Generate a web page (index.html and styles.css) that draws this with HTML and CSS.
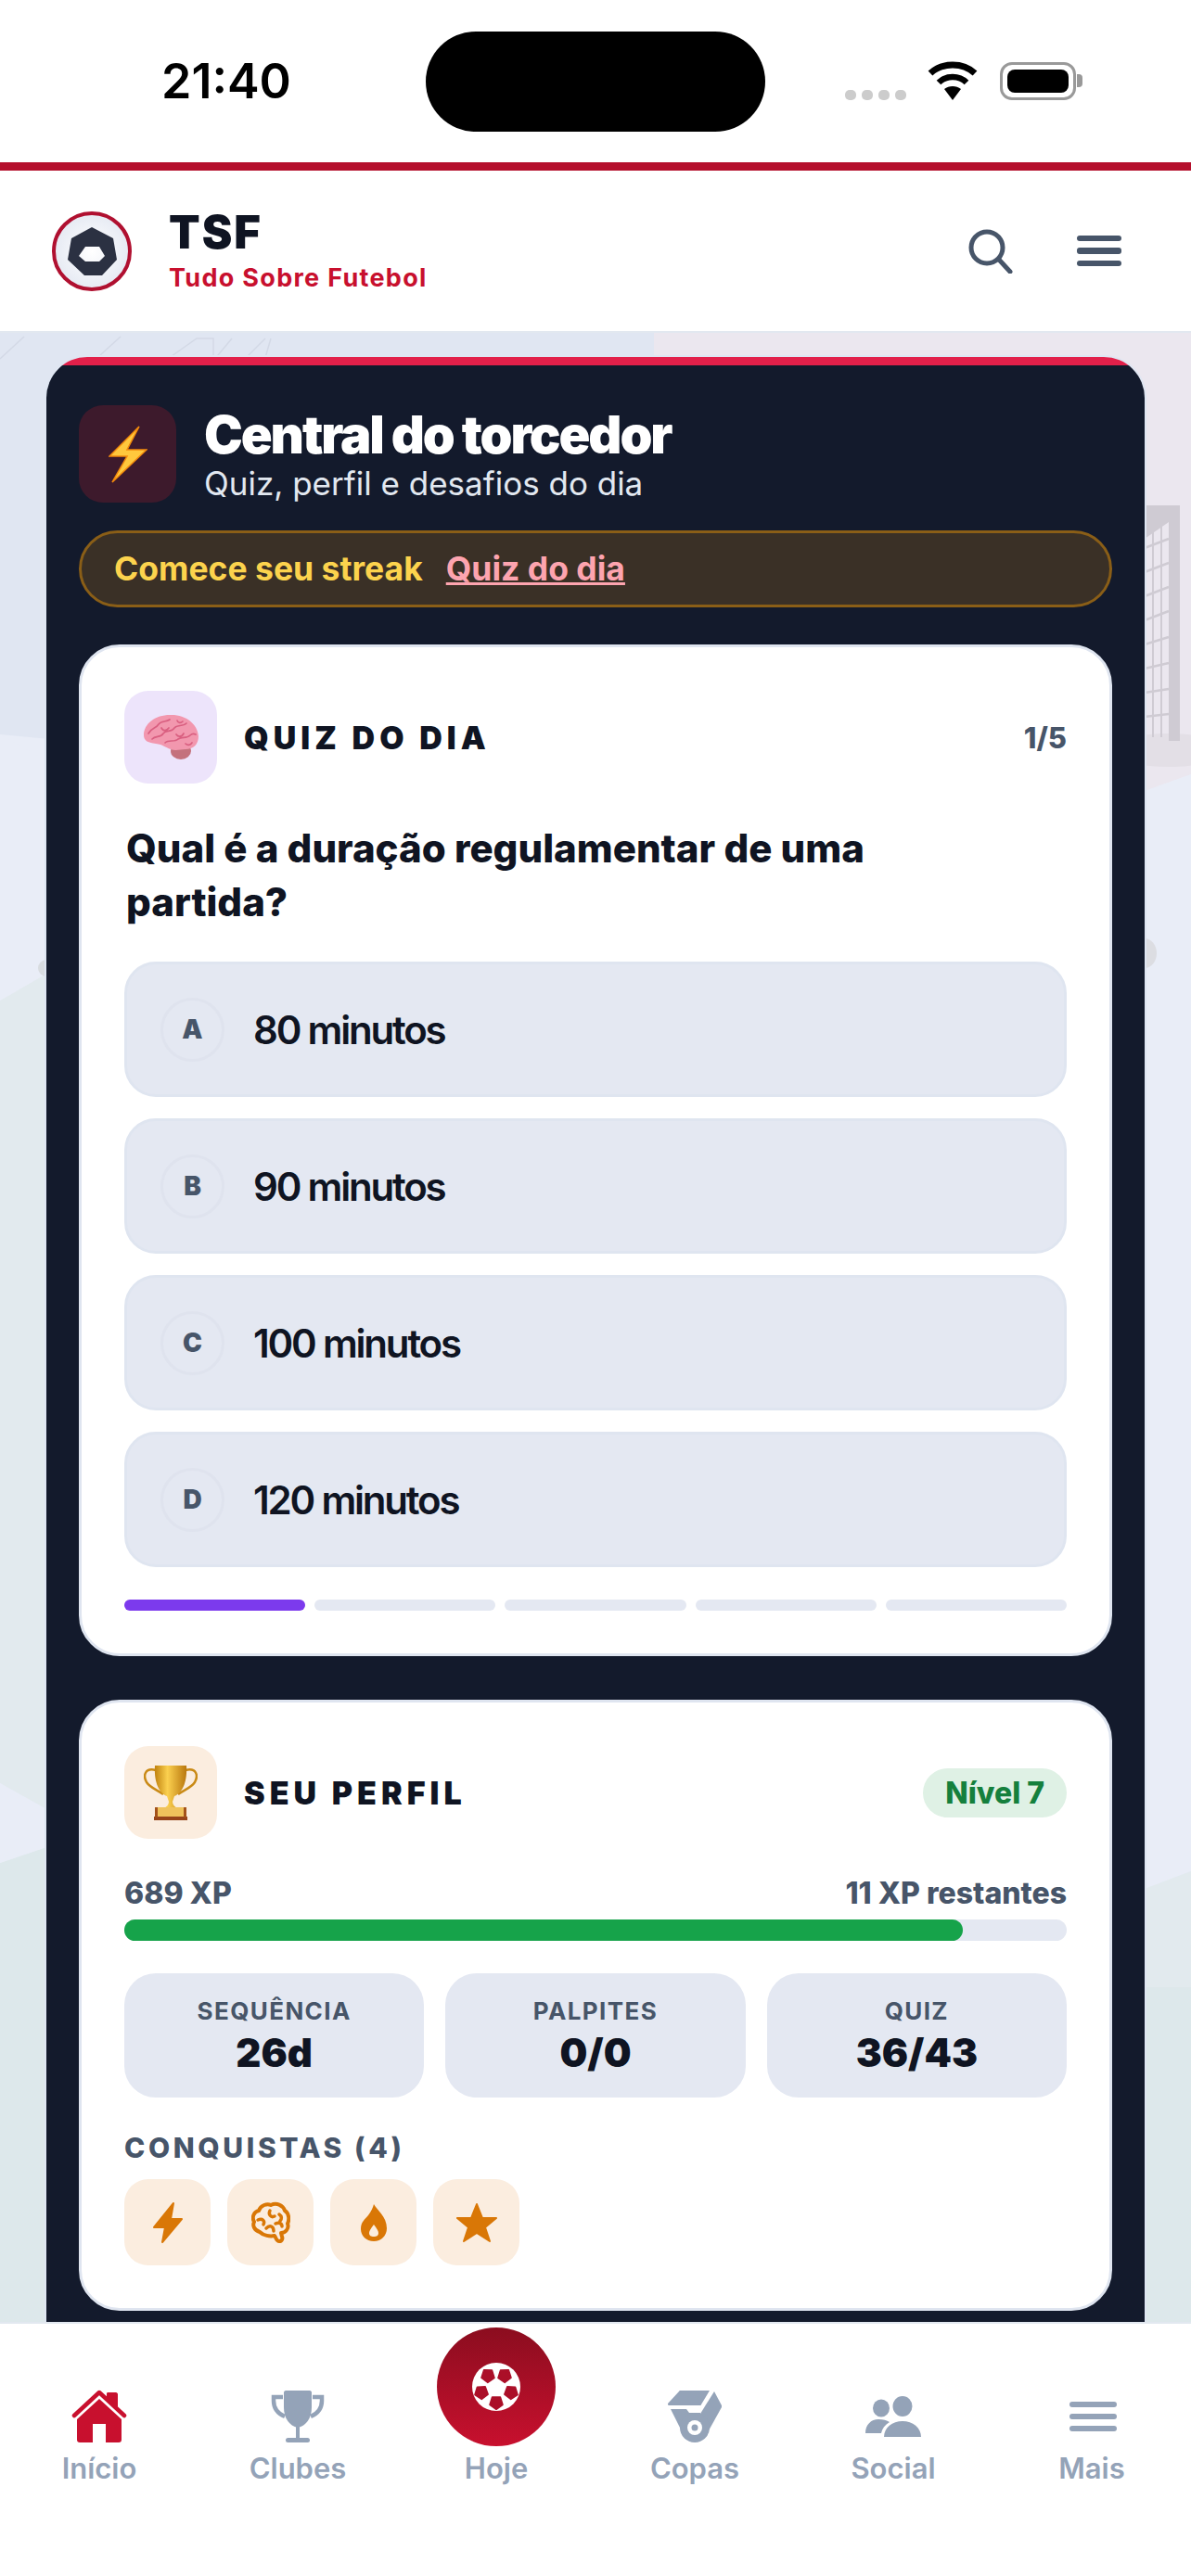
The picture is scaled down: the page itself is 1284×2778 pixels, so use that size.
FILE: index.html
```html
<!DOCTYPE html>
<html lang="pt-BR">
<head>
  <meta charset="UTF-8">
  <meta name="viewport" content="width=device-width, initial-scale=1.0">
  <title>TSF - Tudo Sobre Futebol</title>
  <link rel="stylesheet" href="styles.css">
</head>
<body>
  <div class="page">
    <!-- iOS status bar -->
    <div class="status-bar">
      <span class="status-time">21:40</span>
      <div class="island"></div>
      <div class="status-icons">
        <div class="signal"><i></i><i></i><i></i><i></i></div>
        <svg class="wifi" viewBox="0 0 56 42" width="56" height="42">
          <path d="M28 42 L19 30 C24 26 32 26 37 30 Z" fill="#000"/>
          <path d="M13 23 C21 15 35 15 43 23" fill="none" stroke="#000" stroke-width="6.5"/>
          <path d="M4 13 C17 1 39 1 52 13" fill="none" stroke="#000" stroke-width="7"/>
        </svg>
        <div class="battery"><div class="battery-level"></div></div>
        <div class="battery-tip"></div>
      </div>
    </div>
    <div class="red-line"></div>

    <header class="top-bar">
      <div class="brand">
        <svg class="logo" viewBox="0 0 86 86" width="86" height="86">
          <defs>
            <radialGradient id="logoBg" cx="50%" cy="50%" r="50%">
              <stop offset="0" stop-color="#ffffff"/>
              <stop offset="1" stop-color="#e6eaf3"/>
            </radialGradient>
          </defs>
          <circle cx="43" cy="43" r="41" fill="url(#logoBg)" stroke="#b01030" stroke-width="4"/>
          <path d="M43 17 L66 29 L70 52 L54 69 L35 69 L17 52 L21 29 Z M36 38 L29 48 L36 54 L51 54 L57 48 L51 38 Z" fill="#2b3142" fill-rule="evenodd"/>
        </svg>
        <div class="brand-text">
          <div class="brand-name">TSF</div>
          <div class="brand-tag">Tudo Sobre Futebol</div>
        </div>
      </div>
      <div class="top-actions">
        <svg viewBox="0 0 48 48" width="48" height="48">
          <circle cx="20" cy="20" r="17" fill="none" stroke="#475569" stroke-width="5"/>
          <path d="M33 33 L45 46" stroke="#475569" stroke-width="5" stroke-linecap="round"/>
        </svg>
        <div class="burger"><i></i><i></i><i></i></div>
      </div>
    </header>

    <main class="content">
      <!-- decorative stadium background -->
      <svg class="backdrop" viewBox="0 0 1284 2145" width="1284" height="2145">
        <rect width="1284" height="2145" fill="#e9edf7"/>
        <polygon points="0,0 705,0 705,500 0,433" fill="#e0e6f2"/>
        <polygon points="705,0 1284,0 1284,476 1234,494 705,500" fill="#ebe7ef"/>
        <polygon points="0,720 50,691 1284,691 1284,1659 1234,1678 50,1592 0,1564" fill="#e2eaee"/>
        <polygon points="0,1650 50,1633 1284,1633 1284,2145 0,2145" fill="#dde8eb"/>
        <polygon points="1234,1678 1284,1659 1284,1784 1234,1784" fill="#e2eaee"/>
        <polygon points="0,1564 50,1592 50,1633 0,1650" fill="#e9edf7"/>
        <polygon points="0,433 50,461 50,691 0,720" fill="#e9edf7"/>
        <polygon points="1234,100 1284,100 1284,476 1234,494" fill="#ebe7ef"/>
        <polygon points="1234,494 1284,476 1284,1659 1234,1678" fill="#e9edf7"/>
        <ellipse cx="1234" cy="669" rx="13" ry="16" fill="#dcdde2"/>
        <ellipse cx="50" cy="685" rx="9" ry="9" fill="#d8dce0"/>
        <ellipse cx="1260" cy="450" rx="60" ry="18" fill="#e3dfe6"/>
        <g class="goal">
          <path d="M1234 186 H1272 V440 H1260 V204 L1234 222 Z" fill="#cfcbd3"/>
          <path d="M1234 232 L1260 222 M1234 258 L1260 248 M1234 284 L1260 274 M1234 310 L1260 300 M1234 336 L1260 328 M1234 362 L1260 356 M1234 388 L1260 384 M1234 414 L1260 411" stroke="#cfcbd3" stroke-width="2.5"/>
          <path d="M1243 205 V436 M1252 200 V436" stroke="#cfcbd3" stroke-width="2"/>
        </g>
        <path d="M0 28 L26 4 M108 24 L130 4 M178 30 L212 6 H230 V30 M178 30 H230 L250 6 M262 30 L286 6 M285 30 L292 6" fill="none" stroke="#d3d9e6" stroke-width="1.5"/>
      </svg>

      <section class="panel">
        <div class="panel-head">
          <div class="panel-icon">
            <svg viewBox="0 0 42 62" width="42" height="62">
              <polygon points="33,1 1,33 20,33 4,61 41,26 20,26" fill="#ffc83d" stroke="#f28a0c" stroke-width="1.5"/>
            </svg>
          </div>
          <div>
            <h1 class="panel-title">Central do torcedor</h1>
            <p class="panel-sub">Quiz, perfil e desafios do dia</p>
          </div>
        </div>

        <div class="streak">
          <span class="streak-text">Comece seu streak</span>
          <a class="streak-link">Quiz do dia</a>
        </div>

        <!-- Quiz card -->
        <div class="card">
          <div class="card-head">
            <div class="card-icon card-icon-purple">
              <svg viewBox="0 0 60 50" width="60" height="50">
                <ellipse cx="41" cy="40" rx="11" ry="9" fill="#c4717c"/>
                <path d="M1 23 C1 10 14 1 29 1 C45 0 59 10 60 24 C60 33 54 38 46 38 C40 38 36 40 30 38 C24 36 22 33 14 32 C6 31 1 29 1 23 Z" fill="#f297ae"/>
                <path d="M6 21 C10 14 14 16 17 11 C20 7 25 9 29 6 M10 27 C14 23 19 26 22 21 C25 17 31 20 34 15 C37 11 43 14 47 10 M24 31 C28 27 34 31 38 27 C42 24 47 27 51 23 C53 21 55 21 57 22 M20 15 C22 19 26 18 28 15 M36 22 C38 25 42 25 44 21 M46 32 C48 34 51 34 53 31 M37 7 C38 10 41 10 43 8" fill="none" stroke="#d95f80" stroke-width="1.7" stroke-linecap="round"/>
              </svg>
            </div>
            <h2 class="card-title">QUIZ DO DIA</h2>
            <span class="quiz-count">1/5</span>
          </div>

          <p class="question">Qual é a duração regulamentar de uma partida?</p>

          <div class="options">
            <div class="option"><span class="option-letter">A</span><span>80 minutos</span></div>
            <div class="option"><span class="option-letter">B</span><span>90 minutos</span></div>
            <div class="option"><span class="option-letter">C</span><span>100 minutos</span></div>
            <div class="option"><span class="option-letter">D</span><span>120 minutos</span></div>
          </div>

          <div class="quiz-steps">
            <i class="step-on"></i><i></i><i></i><i></i><i></i>
          </div>
        </div>

        <!-- Profile card -->
        <div class="card">
          <div class="card-head">
            <div class="card-icon card-icon-orange">
              <svg viewBox="0 0 58 60" width="58" height="60">
                <defs>
                  <linearGradient id="gold" x1="0" y1="0" x2="1" y2="0">
                    <stop offset="0" stop-color="#c0820f"/>
                    <stop offset="0.4" stop-color="#fbd04f"/>
                    <stop offset="1" stop-color="#b9770e"/>
                  </linearGradient>
                </defs>
                <path d="M13 6 C1 3 -1 12 3 19 C7 25 14 27 21 32 M45 6 C57 3 59 12 55 19 C51 25 44 27 37 32" fill="none" stroke="#c98a16" stroke-width="2.5"/>
                <path d="M12 1 H46 C47 16 43 30 33 34 L31 40 C31 43 33 45 36 47 H22 C25 45 27 43 27 40 L25 34 C15 30 11 16 12 1 Z" fill="url(#gold)"/>
                <rect x="12" y="46" width="34" height="11" fill="#efc25c"/>
                <rect x="11" y="56" width="36" height="4" fill="#96441a"/>
                <rect x="12" y="46" width="3" height="11" fill="#a3521a"/>
                <rect x="43" y="46" width="3" height="11" fill="#a3521a"/>
              </svg>
            </div>
            <h2 class="card-title">SEU PERFIL</h2>
            <span class="level-badge">Nível 7</span>
          </div>

          <div class="xp-row"><span>689 XP</span><span>11 XP restantes</span></div>
          <div class="xp-bar"><div class="xp-fill" style="width: 89%"></div></div>

          <div class="stats">
            <div class="stat"><span class="stat-label">SEQUÊNCIA</span><span class="stat-value">26d</span></div>
            <div class="stat"><span class="stat-label">PALPITES</span><span class="stat-value">0/0</span></div>
            <div class="stat"><span class="stat-label">QUIZ</span><span class="stat-value">36/43</span></div>
          </div>

          <div class="badges-title">CONQUISTAS (4)</div>
          <div class="badges">
            <div class="badge">
              <svg viewBox="0 0 34 46" width="34" height="46">
                <polygon points="23,2 2,28 14,28 11,44 32,19 20,19" fill="#d97706" stroke="#d97706" stroke-width="2" stroke-linejoin="round"/>
              </svg>
            </div>
            <div class="badge">
              <svg viewBox="0 0 42 46" width="42" height="46">
                <path d="M9 33 C3 31 1 26 3 22 C0 17 3 11 8 10 C10 4 17 2 21 4 C27 1 34 4 36 10 C41 13 41 20 39 24 C41 29 37 34 32 34 L33 38 C34 40 33 43 30 43 C27 43 27 40 25 37 C20 38 13 37 9 33 Z" fill="none" stroke="#d97706" stroke-width="4" stroke-linejoin="round"/>
                <path d="M7 20 C12 18 15 21 13 25 M20 10 C18 14 21 18 25 16 M16 29 C20 25 24 27 24 32 M30 14 C33 16 33 19 31 21 M26 24 C30 22 33 24 33 27" fill="none" stroke="#d97706" stroke-width="3.5" stroke-linecap="round"/>
              </svg>
            </div>
            <div class="badge">
              <svg viewBox="0 0 30 42" width="30" height="42">
                <path d="M15 1 C18 7 29 14 29 27 C29 35 23 41 15 41 C7 41 1 35 1 28 C1 20 5 18 9 13 C12 9 14 5 15 1 Z M15 23 C12 27 10 30 10 32 C10 35 12 36 15 36 C18 36 20 35 20 32 C20 30 18 27 15 23 Z" fill="#d97706" fill-rule="evenodd"/>
              </svg>
            </div>
            <div class="badge">
              <svg viewBox="0 0 46 44" width="46" height="44">
                <polygon points="23,2 29,17 44,17 32,27 37,42 23,33 9,42 14,27 2,17 17,17" fill="#d97706" stroke="#d97706" stroke-width="2" stroke-linejoin="round"/>
              </svg>
            </div>
          </div>
        </div>
      </section>
    </main>

    <nav class="bottom-nav">
      <a class="nav-item">
        <svg viewBox="0 0 60 60" width="60" height="60">
          <path d="M38 12 V5 C38 4 39 4 40 4 H48 C49 4 50 5 50 6 V20 Z" fill="#c8102e"/>
          <path d="M3 29 L30 4 L57 29" fill="none" stroke="#c8102e" stroke-width="4.5" stroke-linecap="round" stroke-linejoin="round"/>
          <path d="M6 33 L30 11 L54 33 V55 C54 57 53 58 51 58 H37 V38 H23 V58 H9 C7 58 6 57 6 55 Z" fill="#c8102e"/>
        </svg>
        <span>Início</span>
      </a>
      <a class="nav-item">
        <svg viewBox="0 0 60 60" width="60" height="60">
          <path d="M14 9 H4 V13 C4 21 9 27 16 30 M46 9 H56 V13 C56 21 51 27 44 30" fill="none" stroke="#94a3b8" stroke-width="4.5"/>
          <path d="M15 4 C15 3 16 2 17 2 H43 C44 2 45 3 45 4 V20 C45 32 39 40 30 42 C21 40 15 32 15 20 Z" fill="#94a3b8"/>
          <rect x="28" y="40" width="4" height="15" fill="#94a3b8"/>
          <rect x="17" y="53" width="26" height="5" rx="2.5" fill="#94a3b8"/>
        </svg>
        <span>Clubes</span>
      </a>
      <a class="nav-item">
        <div class="nav-ball">
          <svg viewBox="-27 -27 54 54" width="54" height="54">
            <defs>
              <polygon id="patch" points="0,-7.5 7,-2.3 4.4,6 -4.4,6 -7,-2.3" fill="#ab0f28" stroke="#ab0f28" stroke-width="1.5" stroke-linejoin="round"/>
            </defs>
            <circle r="26" fill="#fff"/>
            <use href="#patch" transform="translate(-9 -12) rotate(-35)"/>
            <use href="#patch" transform="translate(9 -12) rotate(35)"/>
            <use href="#patch" transform="translate(-16 6) rotate(-110)"/>
            <use href="#patch" transform="translate(16 6) rotate(110)"/>
            <use href="#patch" transform="translate(0 17) rotate(180)"/>
          </svg>
        </div>
        <span>Hoje</span>
      </a>
      <a class="nav-item">
        <svg viewBox="0 0 60 60" width="60" height="60">
          <path d="M13 3 C13 2 14 2 15 2 H46 L37 17 C37 18 36 18 35 18 H2 C1 18 1 17 1 16 Z" fill="#94a3b8"/>
          <path d="M51 3 L59 18 V20 L44 47 H37 L36 27 Z" fill="#94a3b8"/>
          <path d="M4 22 H21 L24 26 H36 V46 H16 Z" fill="#94a3b8"/>
          <circle cx="30" cy="42" r="16" fill="#94a3b8"/>
          <circle cx="30" cy="42" r="8" fill="#fff"/>
          <circle cx="30" cy="42" r="3.5" fill="#94a3b8"/>
        </svg>
        <span>Copas</span>
      </a>
      <a class="nav-item">
        <svg viewBox="0 0 60 60" width="60" height="60">
          <ellipse cx="17" cy="21" rx="9" ry="9.5" fill="#94a3b8"/>
          <ellipse cx="40" cy="19" rx="10.5" ry="11" fill="#94a3b8"/>
          <path d="M0 48 C0 39 6 33 14 33 C19 33 23 34 26 36 C21 39 18 43 17 48 Z" fill="#94a3b8"/>
          <path d="M20 52 C20 42 29 35 40 35 C51 35 60 42 60 52 Z" fill="#94a3b8"/>
        </svg>
        <span>Social</span>
      </a>
      <a class="nav-item">
        <svg viewBox="0 0 60 60" width="60" height="60">
          <path d="M9 17 H54 M9 30 H54 M9 43 H54" stroke="#94a3b8" stroke-width="6" stroke-linecap="round"/>
        </svg>
        <span>Mais</span>
      </a>
    </nav>
  </div>
</body>
</html>
```

FILE: styles.css
```css
/* Global Styles */
* {
  box-sizing: border-box;
}

body {
  margin: 0;
  padding: 0;
  font-family: Inter, "Noto Sans", sans-serif;
  background-color: #ffffff;
  color: #0f1422;
}

h1, h2, p {
  margin: 0;
}

.page {
  width: 1284px;
  height: 2778px;
  display: flex;
  flex-direction: column;
  overflow: hidden;
}

/* Status bar */
.status-bar {
  height: 175px;
  display: flex;
  align-items: flex-start;
  padding-top: 34px;
}

.status-time {
  width: 459px;
  padding: 28px 0 0 174px;
  font-size: 52px;
  line-height: 52px;
  font-weight: 600;
  color: #000000;
}

.island {
  width: 366px;
  height: 108px;
  border-radius: 54px;
  background-color: #000000;
}

.status-icons {
  display: flex;
  align-items: flex-end;
  height: 74px;
  padding-left: 86px;
}

.signal {
  display: flex;
  gap: 6px;
  margin-right: 22px;
}

.signal i {
  width: 12px;
  height: 11px;
  border-radius: 5px;
  background-color: #cccccc;
}

.wifi {
  margin-right: 23px;
}

.battery {
  width: 82px;
  height: 41px;
  padding: 5px;
  border: 3px solid #999999;
  border-radius: 13px;
}

.battery-level {
  height: 100%;
  border-radius: 8px;
  background-color: #000000;
}

.battery-tip {
  width: 6px;
  height: 14px;
  margin: 0 0 14px 1px;
  border-radius: 0 4px 4px 0;
  background-color: #999999;
}

.red-line {
  height: 9px;
  background-color: #b50f2c;
}

/* Top bar */
.top-bar {
  height: 175px;
  flex-shrink: 0;
  display: flex;
  align-items: center;
  justify-content: space-between;
  padding: 0 75px 0 56px;
  border-bottom: 2px solid #e2e8f0;
}

.brand {
  display: flex;
  align-items: center;
  gap: 40px;
}

.brand-name {
  font-size: 49px;
  line-height: 50px;
  font-weight: 900;
  letter-spacing: 2px;
}

.brand-tag {
  margin-top: 8px;
  font-size: 27px;
  line-height: 32px;
  font-weight: 700;
  letter-spacing: 1.3px;
  color: #c8102e;
}

.top-actions {
  display: flex;
  align-items: center;
  gap: 69px;
}

.burger {
  display: flex;
  flex-direction: column;
  gap: 7px;
}

.burger i {
  display: block;
  width: 48px;
  height: 6.5px;
  border-radius: 3px;
  background-color: #475569;
}

/* Main content */
.content {
  position: relative;
  flex: 1;
  min-height: 0;
  overflow: hidden;
  padding: 26px 50px 0;
}

.backdrop {
  position: absolute;
  top: 0;
  left: 0;
}

.panel {
  position: relative;
  padding: 52px 35px 60px;
  border-radius: 44px 44px 0 0;
  background: linear-gradient(#e2204a 9px, #131a2c 9px);
  box-shadow: 0 0 0 2px #dfe6f2;
}

.panel-head {
  display: flex;
  align-items: center;
  gap: 30px;
}

.panel-icon {
  width: 105px;
  height: 105px;
  display: flex;
  align-items: center;
  justify-content: center;
  border-radius: 26px;
  background-color: #3d1a2c;
}

.panel-title {
  font-size: 56px;
  line-height: 60px;
  font-weight: 900;
  letter-spacing: -2.1px;
  color: #ffffff;
}

.panel-sub {
  margin-top: 2px;
  font-size: 35px;
  line-height: 40px;
  color: #e2e8f0;
}

.streak {
  height: 83px;
  margin-top: 30px;
  display: flex;
  align-items: center;
  gap: 25px;
  padding-left: 35px;
  border: 3px solid #8a5e17;
  border-radius: 42px;
  background-color: #3a3026;
  font-size: 35.5px;
  font-weight: 700;
}

.streak-text {
  color: #fcd34d;
}

.streak-link {
  color: #fda4af;
  text-decoration: underline;
}

/* Cards */
.card {
  margin-top: 40px;
  padding: 47px 46px 46px;
  border: 3px solid #dfe5f0;
  border-radius: 44px;
  background-color: #ffffff;
}

.card + .card {
  margin-top: 47px;
}

.card-head {
  display: flex;
  align-items: center;
  gap: 29px;
  height: 100px;
}

.card-icon {
  width: 100px;
  height: 100px;
  display: flex;
  align-items: center;
  justify-content: center;
  border-radius: 26px;
}

.card-icon-purple {
  background-color: #ede4fb;
}

.card-icon-orange {
  background-color: #fbeddf;
}

.card-title {
  flex: 1;
  font-size: 34px;
  font-weight: 900;
  letter-spacing: 5px;
}

.quiz-count {
  font-size: 31px;
  font-weight: 800;
  color: #475569;
}

.level-badge {
  height: 53px;
  padding: 0 24px;
  display: flex;
  align-items: center;
  border-radius: 27px;
  background-color: #dff1e5;
  font-size: 32px;
  font-weight: 800;
  color: #15803d;
}

.question {
  margin-top: 41px;
  padding: 0 60px 0 2px;
  font-size: 42px;
  line-height: 58px;
  font-weight: 800;
}

.options {
  margin-top: 35px;
  display: flex;
  flex-direction: column;
  gap: 23px;
}

.option {
  height: 146px;
  display: flex;
  align-items: center;
  gap: 31px;
  padding-left: 36px;
  border: 3px solid #dfe5f0;
  border-radius: 34px;
  background-color: #e4e8f2;
  font-size: 42px;
  font-weight: 600;
  letter-spacing: -2.2px;
}

.option-letter {
  width: 69px;
  height: 69px;
  display: flex;
  align-items: center;
  justify-content: center;
  border: 3px solid #dfe3ee;
  border-radius: 50%;
  font-size: 28px;
  font-weight: 900;
  letter-spacing: 0;
  color: #475569;
}

.quiz-steps {
  margin-top: 35px;
  display: flex;
  gap: 10px;
}

.quiz-steps i {
  flex: 1;
  height: 12px;
  border-radius: 6px;
  background-color: #e4e8f2;
}

.quiz-steps .step-on {
  background-color: #7c3aed;
}

/* Profile */
.xp-row {
  margin-top: 41px;
  display: flex;
  justify-content: space-between;
  font-size: 32px;
  line-height: 36px;
  font-weight: 800;
  color: #475569;
}

.xp-bar {
  height: 23px;
  margin-top: 10px;
  border-radius: 12px;
  background-color: #e4e8f2;
}

.xp-fill {
  height: 100%;
  border-radius: 12px;
  background-color: #16a34a;
}

.stats {
  margin-top: 35px;
  display: grid;
  grid-template-columns: repeat(3, 1fr);
  gap: 23px;
}

.stat {
  height: 134px;
  display: flex;
  flex-direction: column;
  align-items: center;
  justify-content: center;
  border-radius: 34px;
  background-color: #e4e8f2;
}

.stat-label {
  font-size: 26px;
  line-height: 32px;
  font-weight: 700;
  letter-spacing: 1.4px;
  color: #475569;
}

.stat-value {
  margin-top: 5px;
  font-size: 42px;
  line-height: 48px;
  font-weight: 900;
}

.badges-title {
  margin-top: 36px;
  font-size: 30px;
  line-height: 36px;
  font-weight: 800;
  letter-spacing: 3.6px;
  color: #475569;
}

.badges {
  margin-top: 16px;
  display: flex;
  gap: 18px;
}

.badge {
  width: 93px;
  height: 93px;
  display: flex;
  align-items: center;
  justify-content: center;
  border-radius: 26px;
  background-color: #fbeddf;
}

/* Bottom nav */
.bottom-nav {
  height: 274px;
  flex-shrink: 0;
  position: relative;
  display: grid;
  grid-template-columns: repeat(6, 214px);
  padding-bottom: 98px;
  border-top: 2px solid #e2e8f0;
  background-color: #ffffff;
}

.nav-item {
  display: flex;
  flex-direction: column;
  align-items: center;
  justify-content: flex-end;
  gap: 8px;
  font-size: 31px;
  line-height: 36px;
  font-weight: 600;
  color: #94a3b8;
}

.nav-ball {
  width: 128px;
  height: 128px;
  margin-bottom: -2px;
  display: flex;
  align-items: center;
  justify-content: center;
  border-radius: 50%;
  background: linear-gradient(180deg, #8b0d1f, #c8102e);
}
```
